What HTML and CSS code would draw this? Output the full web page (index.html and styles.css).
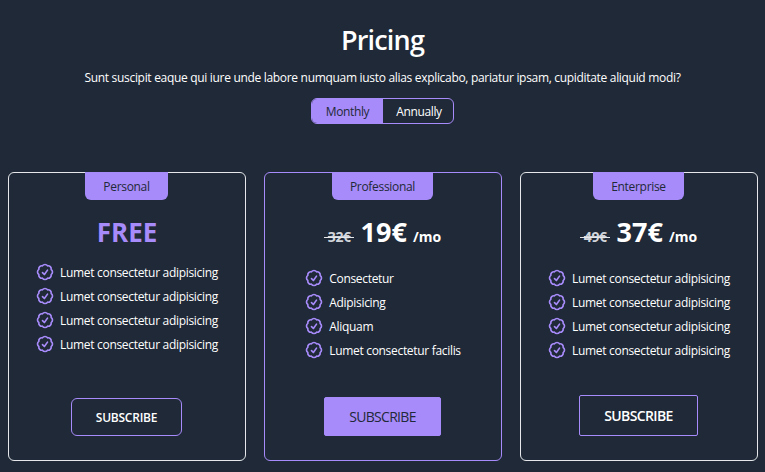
FILE: index.html
```html
<!DOCTYPE html>
<html lang="en">
<head>
<meta charset="utf-8">
<title>Pricing</title>
<link rel="stylesheet" href="styles.css">
</head>
<body>
<svg class="sprite" width="0" height="0" aria-hidden="true"><symbol id="badge" viewBox="0 0 24 24"><path fill="none" stroke="currentColor" stroke-width="2" stroke-linecap="round" stroke-linejoin="round" d="M9 12.75 11.25 15 15 9.75M21 12c0 1.268-.63 2.39-1.593 3.068a3.745 3.745 0 0 1-1.043 3.296 3.745 3.745 0 0 1-3.296 1.043A3.745 3.745 0 0 1 12 21c-1.268 0-2.39-.63-3.068-1.593a3.746 3.746 0 0 1-3.296-1.043 3.745 3.745 0 0 1-1.043-3.296A3.745 3.745 0 0 1 3 12c0-1.268.63-2.39 1.593-3.068a3.745 3.745 0 0 1 1.043-3.296 3.746 3.746 0 0 1 3.296-1.043A3.746 3.746 0 0 1 12 3c1.268 0 2.39.63 3.068 1.593a3.746 3.746 0 0 1 3.296 1.043 3.746 3.746 0 0 1 1.043 3.296A3.745 3.745 0 0 1 21 12Z"/></symbol></svg>
<header class="intro">
  <h1 class="title">Pricing</h1>
  <p class="lead">Sunt suscipit eaque qui iure unde labore numquam iusto alias explicabo, pariatur ipsam, cupiditate aliquid modi?</p>
  <div class="toggle">
    <span class="toggle-item toggle-on">Monthly</span>
    <span class="toggle-item">Annually</span>
  </div>
</header>
<main class="plans">
  <section class="card">
    <h2 class="tab">Personal</h2>
    <div class="price price-free">FREE</div>
    <ul class="features">
      <li class="feature"><svg class="check"><use href="#badge"/></svg>Lumet consectetur adipisicing</li>
      <li class="feature"><svg class="check"><use href="#badge"/></svg>Lumet consectetur adipisicing</li>
      <li class="feature"><svg class="check"><use href="#badge"/></svg>Lumet consectetur adipisicing</li>
      <li class="feature"><svg class="check"><use href="#badge"/></svg>Lumet consectetur adipisicing</li>
    </ul>
    <button class="btn btn-round">SUBSCRIBE</button>
  </section>
  <section class="card card-accent">
    <h2 class="tab tab-pro">Professional</h2>
    <div class="price price-paid"><s class="old">32€</s><span class="now">19€</span><span class="per">/mo</span></div>
    <ul class="features features-low">
      <li class="feature"><svg class="check"><use href="#badge"/></svg>Consectetur</li>
      <li class="feature"><svg class="check"><use href="#badge"/></svg>Adipisicing</li>
      <li class="feature"><svg class="check"><use href="#badge"/></svg>Aliquam</li>
      <li class="feature"><svg class="check"><use href="#badge"/></svg>Lumet consectetur facilis</li>
    </ul>
    <button class="btn btn-fill">SUBSCRIBE</button>
  </section>
  <section class="card">
    <h2 class="tab tab-ent">Enterprise</h2>
    <div class="price price-paid"><s class="old">49€</s><span class="now">37€</span><span class="per">/mo</span></div>
    <ul class="features features-low">
      <li class="feature"><svg class="check"><use href="#badge"/></svg>Lumet consectetur adipisicing</li>
      <li class="feature"><svg class="check"><use href="#badge"/></svg>Lumet consectetur adipisicing</li>
      <li class="feature"><svg class="check"><use href="#badge"/></svg>Lumet consectetur adipisicing</li>
      <li class="feature"><svg class="check"><use href="#badge"/></svg>Lumet consectetur adipisicing</li>
    </ul>
    <button class="btn btn-square">SUBSCRIBE</button>
  </section>
</main>
</body>
</html>
```
FILE: styles.css
```css
* { box-sizing: border-box; }
html, body { height: 100%; }
body {
  margin: 0;
  background: #1f2937;
  color: #fff;
  font-family: "Open Sans", "Noto Sans", sans-serif;
  overflow: hidden;
}
.sprite { display: block; height: 0; }
.intro {
  display: flex;
  flex-direction: column;
  align-items: center;
  padding-top: 20px;
}
.title { margin: 0; font-size: 27px; line-height: 40px; font-weight: 600; letter-spacing: -0.03em; }
.lead { margin: 8px 0 0; font-size: 12px; font-weight: 500; line-height: 20px; letter-spacing: -0.026em; }
.toggle {
  display: flex;
  margin-top: 10px;
  width: 143px;
  height: 26px;
  border: 1px solid #a78bfa;
  border-radius: 6px;
  overflow: hidden;
}
.toggle-item {
  display: flex;
  align-items: center;
  justify-content: center;
  flex: 1;
  font-size: 12px;
  font-weight: 500;
  letter-spacing: -0.031em;
  padding-left: 2px;
}
.toggle-on { flex: 0 0 71px; background: #a78bfa; color: #1f2937; padding-left: 0; }
.plans {
  display: flex;
  gap: 18px;
  margin-top: 48px;
  padding: 0 7px 0 8px;
}
.card {
  display: flex;
  flex-direction: column;
  align-items: center;
  width: 238px;
  height: 289px;
  border: 1px solid #e5e7eb;
  border-radius: 6px;
  padding-bottom: 24px;
}
.card-accent { border-color: #a78bfa; }
.tab {
  margin: -1px 1px 0 0;
  width: 83px;
  height: 28px;
  display: flex;
  align-items: center;
  justify-content: center;
  background: #a78bfa;
  color: #1f2937;
  font-size: 12px;
  font-weight: 500;
  letter-spacing: -0.026em;
  border-radius: 0 0 6px 6px;
}
.tab-pro { width: 101px; }
.tab-ent { width: 91px; }
.price {
  display: flex;
  align-items: baseline;
  justify-content: center;
  margin-top: 12px;
  height: 40px;
  line-height: 40px;
  font-weight: 700;
  font-size: 14px;
}
.price-free { font-size: 26px; color: #a78bfa; }
.price-paid { padding-left: 3px; }
.old { position: relative; font-size: 14px; letter-spacing: -0.03em; color: #d1d5db; }
.old::after {
  content: "";
  position: absolute;
  left: -4px;
  right: -3px;
  top: 20px;
  height: 1px;
  background: #e5e7eb;
}
.now { font-size: 27px; margin: 0 6px 0 10px; }
.per { font-size: 14px; }
.features {
  list-style: none;
  margin: 10px 1px 0 0;
  padding: 0;
  display: flex;
  flex-direction: column;
  align-self: center;
  gap: 4px;
}
.features-low { margin-top: 16px; }
.feature {
  display: flex;
  align-items: center;
  height: 20px;
  font-size: 12px;
  font-weight: 500;
  letter-spacing: -0.026em;
}
.check {
  width: 20px;
  height: 20px;
  color: #a78bfa;
  margin-right: 5px;
  flex: none;
}
.btn {
  margin-top: auto;
  margin-right: 1px;
  font-family: inherit;
  color: #fff;
  background: transparent;
  border: 1px solid #a78bfa;
  font-size: 12px;
  font-weight: 600;
  letter-spacing: -0.02em;
  padding: 0;
}
.btn-round { width: 111px; height: 38px; border-radius: 6px; }
.btn-fill { width: 117px; height: 39px; border-radius: 2px; background: #a78bfa; color: #1f2937; font-size: 14px; font-weight: 500; letter-spacing: -0.05em; }
.btn-square { width: 119px; height: 41px; border-radius: 2px; font-size: 14px; letter-spacing: -0.045em; }
```
